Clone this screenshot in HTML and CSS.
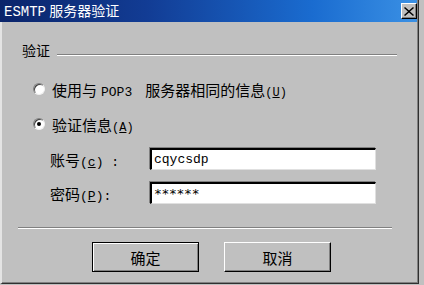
FILE: index.html
```html
<!DOCTYPE html>
<html>
<head>
  <title>ESMTP 服务器验证</title>
  <link rel="stylesheet" href="styles.css">
</head>
<body>
  <div class="window">
    <div class="titlebar">
      <span class="title"><span class="latin">ESMTP</span> 服务器验证</span>
      <span class="close">
        <svg width="10" height="9" viewBox="0 0 10 9">
          <path d="M1 0 L5 3.5 L9 0 L10 1 L6 4.5 L10 8 L9 9 L5 5.5 L1 9 L0 8 L4 4.5 L0 1 Z" fill="#000"/>
        </svg>
      </span>
    </div>

    <div class="content">
      <div class="group-head">
        <span class="group-label">验证</span>
        <div class="etched"></div>
      </div>

      <div class="radio-row first">
        <span class="radio"></span>
        <span class="radio-text">使用与<span class="latin pop">POP3</span>服务器相同的信息<span class="latin">(<u>U</u>)</span></span>
      </div>
      <div class="radio-row">
        <span class="radio checked"></span>
        <span class="radio-text">验证信息<span class="latin">(<u>A</u>)</span></span>
      </div>

      <div class="field first">
        <span class="field-label">账号<span class="latin">(<u>c</u>) :</span></span>
        <div class="textbox">cqycsdp</div>
      </div>
      <div class="field">
        <span class="field-label">密码<span class="latin">(<u>P</u>):</span></span>
        <div class="textbox stars">******</div>
      </div>

      <div class="separator"></div>

      <div class="buttons">
        <div class="btn default">确定</div>
        <div class="btn">取消</div>
      </div>
    </div>
  </div>
</body>
</html>
```

FILE: styles.css
```css
body{
  margin: 0;
  background-color: #c0c0c0;
  font-family: "Noto Sans CJK SC", "Liberation Sans", sans-serif;
  color: #000;
}
.latin{
  font-family: "Liberation Mono", "Noto Sans CJK SC", monospace;
}
.window{
  width: 419px;
  height: 284px;
  box-sizing: border-box;
  background-color: #c0c0c0;
  border-left: 2px solid #e4e4e4;
  border-right: 1px solid #303030;
  border-bottom: 1px solid #303030;
  box-shadow: inset -1px -1px 0 #808080;
}

/* title bar */
.titlebar{
  height: 22px;
  margin-left: -2px;
  margin-right: 1px;
  display: flex;
  align-items: center;
  justify-content: space-between;
  background: linear-gradient(to right, #0a246a 0%, #123c94 35%, #1a6cd0 75%, #3a90e4 100%);
  color: #fff;
}
.title{
  padding-left: 4px;
  font-size: 14px;
  line-height: 22px;
}
.title .latin{
  font-size: 14px;
}
.close{
  width: 16px;
  height: 16px;
  box-sizing: border-box;
  background-color: #c0c0c0;
  display: flex;
  align-items: center;
  justify-content: center;
  border-top: 1px solid #fff;
  border-left: 1px solid #fff;
  border-right: 1px solid #000;
  border-bottom: 1px solid #000;
  box-shadow: inset -1px -1px 0 #808080;
}

/* dialog content */
.content{
  padding: 20px 0 0 18px;
}
.group-head{
  display: flex;
  height: 16px;
  width: 377px;
}
.group-label{
  font-size: 14px;
  line-height: 16px;
  padding-left: 2px;
}
.etched{
  flex: 1;
  margin-left: 7px;
  margin-top: 12px;
  height: 0;
  border-top: 1px solid #808080;
  border-bottom: 1px solid #fff;
}
.radio-row{
  display: flex;
  align-items: center;
  height: 22px;
  margin-top: 13px;
  margin-left: 13px;
  font-size: 15px;
}
.radio-row.first{
  margin-top: 20px;
}
.radio{
  width: 12px;
  height: 12px;
  box-sizing: border-box;
  border-radius: 50%;
  background-color: #fff;
  border: 1px solid;
  border-color: #808080 #f0f0f0 #f0f0f0 #808080;
  box-shadow: inset 1px 1px 0 #404040;
  position: relative;
  margin-right: 7px;
}
.radio.checked:after{
  content: '';
  position: absolute;
  width: 4px;
  height: 4px;
  border-radius: 50%;
  background-color: #000;
  left: 3px;
  top: 3px;
}
.radio-text .latin{
  font-size: 12px;
}
.radio-text .pop{
  font-size: 13px;
  margin-left: 4px;
  margin-right: 13px;
}
.field{
  display: flex;
  align-items: center;
  margin-top: 12px;
  padding-left: 30px;
}
.field.first{
  margin-top: 13px;
}
.field-label{
  width: 100px;
  font-size: 15px;
}
.field-label .latin{
  font-size: 13px;
}
.textbox{
  width: 226px;
  height: 22px;
  box-sizing: border-box;
  background-color: #fff;
  border-top: 2px solid #000;
  border-left: 2px solid #000;
  border-right: 1px solid #e0e0e0;
  border-bottom: 1px solid #e0e0e0;
  box-shadow: -1px -1px 0 #808080;
  padding-left: 2px;
  font-family: "Liberation Mono", monospace;
  font-size: 13px;
  line-height: 19px;
}
.textbox.stars{
  font-family: "DejaVu Sans Mono", monospace;
  font-size: 13px;
  letter-spacing: -0.3px;
}
.separator{
  width: 374px;
  margin-left: -2px;
  margin-top: 23px;
  border-top: 1px solid #808080;
  border-bottom: 1px solid #fff;
}
.buttons{
  display: flex;
  gap: 25px;
  margin-top: 13px;
  padding-left: 72px;
}
.btn{
  width: 107px;
  height: 30px;
  box-sizing: border-box;
  display: flex;
  align-items: center;
  justify-content: center;
  font-size: 15px;
  border-top: 1px solid #fff;
  border-left: 1px solid #fff;
  border-right: 1px solid #000;
  border-bottom: 1px solid #000;
  box-shadow: inset -1px -1px 0 #808080;
}
.btn.default{
  border: 1px solid #000;
  box-shadow: inset 1px 1px 0 #fff, inset -1px -1px 0 #808080;
}
```
